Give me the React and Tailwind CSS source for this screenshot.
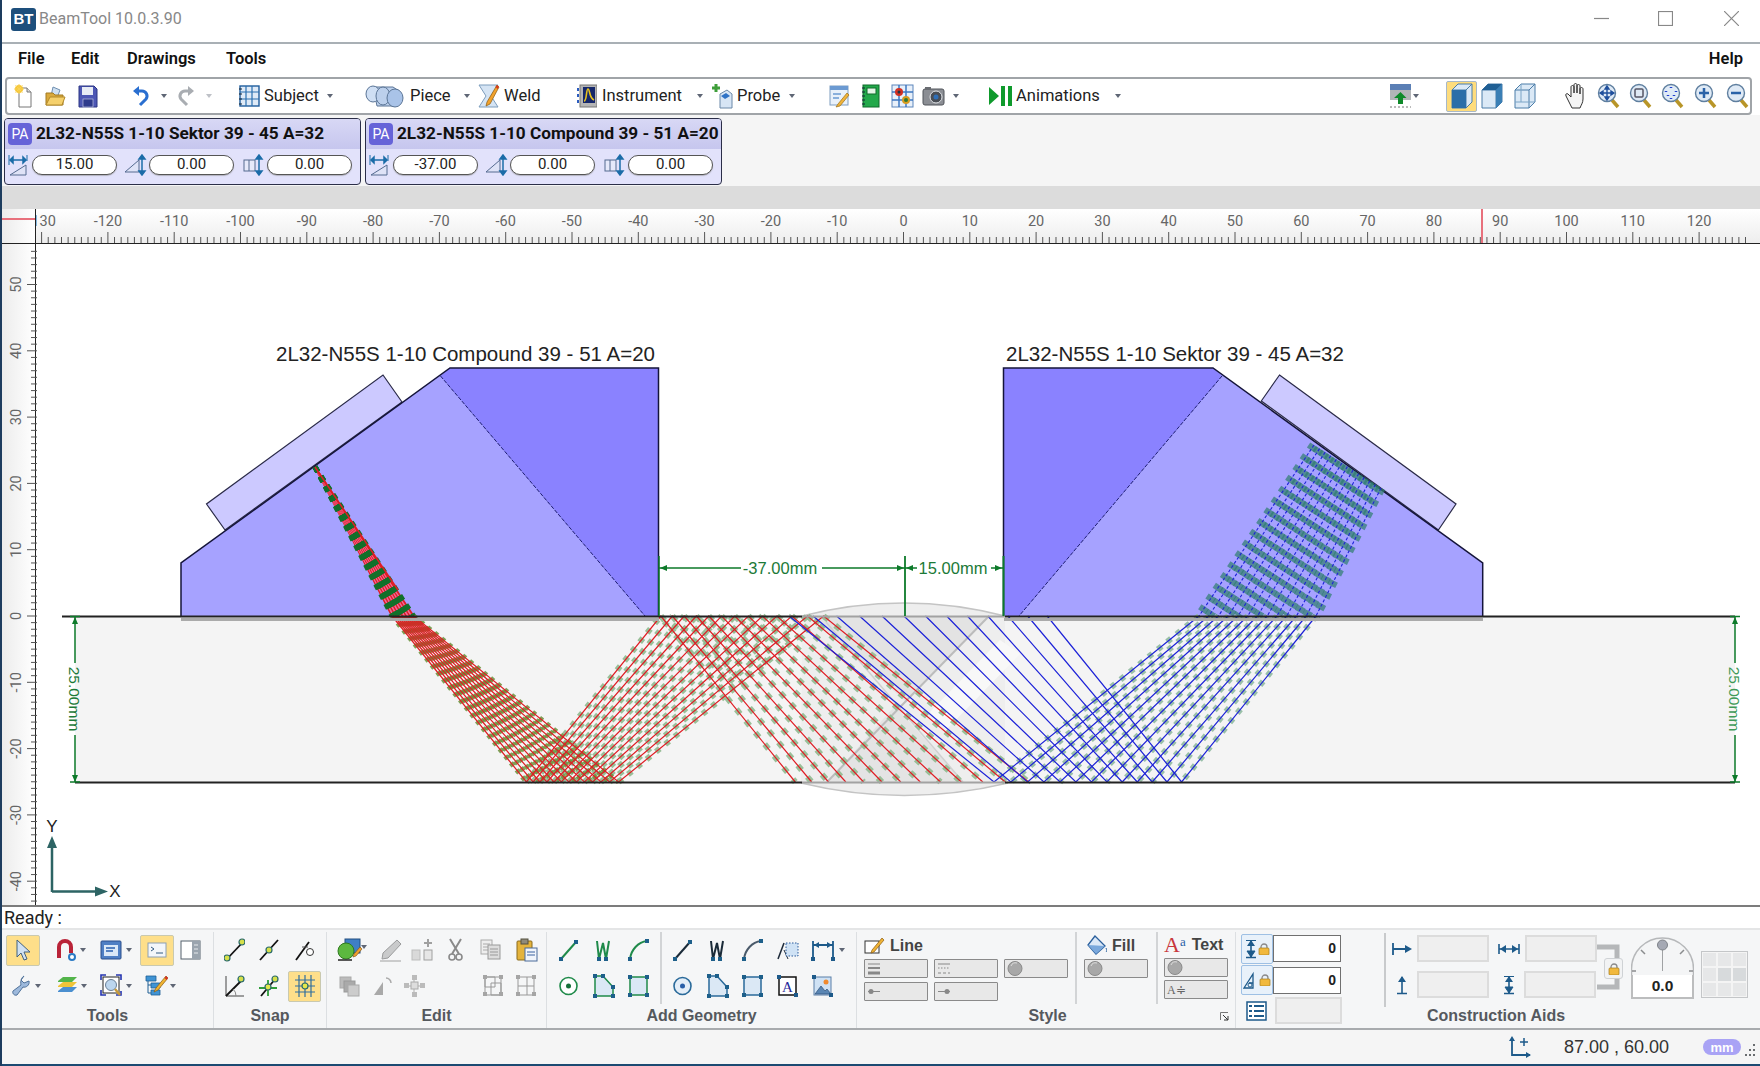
import React from 'react'

const rad = (d) => (d * Math.PI) / 180
const range = (n) => Array.from({ length: n }, (_, i) => i)

function I({ w, h = 20, className = '', children }) {
  return (
    <svg width={w} height={h} viewBox={`0 0 ${w} ${h}`} className={`shrink-0 ${className}`}>
      {children}
    </svg>
  )
}

const Caret = ({ className = '' }) => (
  <I w={6} h={4} className={className}><path d="M0 0h6L3 4z" fill="#5f6675" /></I>
)

/* ---------- top toolbar icons ---------- */
const NewFile = ({ className }) => (
  <I w={18} h={24} className={className}>
    <path d="M5 4h8l4 4v15H5z" fill="#fff" stroke="#777" />
    <path d="M13 4v4h4" fill="#ddd" stroke="#777" />
    <circle cx="5" cy="5" r="4" fill="#f7c531" />
    <path d="M5 0v10M0 5h10M1.5 1.5l7 7M8.5 1.5l-7 7" stroke="#f7d25a" strokeWidth="1" />
  </I>
)
const OpenFolder = ({ className }) => (
  <I w={22} h={22} className={className}>
    <path d="M9 2l7 3-3 8-6-2z" fill="#cfe0f2" stroke="#6f8fb0" />
    <path d="M2 8h7l2 2h8v10H2z" fill="#d9a93c" stroke="#a27b23" />
    <path d="M2 20l4-8h15l-3 8z" fill="#f5d06c" stroke="#b38a2b" />
  </I>
)
const Save = ({ className }) => (
  <I w={20} h={24} className={className}>
    <path d="M1 2h15l3 3v18H1z" fill="#4d57b4" stroke="#2d3684" />
    <rect x="4" y="3" width="11" height="8" fill="#e8ecf5" />
    <rect x="5" y="15" width="10" height="8" fill="#2e3a8c" stroke="#cfd4ea" strokeWidth=".6" />
  </I>
)
const Undo = ({ color = '#2a6fd0', flip = false, className }) => (
  <I w={18} h={22} className={className}>
    <g transform={flip ? 'translate(18 0) scale(-1 1)' : undefined}>
      <path d="M5 6h5a5 5 0 0 1 4 8l-6 6" fill="none" stroke={color} strokeWidth="3" />
      <path d="M7 1L1 6l6 5z" fill={color} />
    </g>
  </I>
)
const Subject = ({ className }) => (
  <I w={22} h={24} className={className}>
    <rect x="2" y="2" width="19" height="20" fill="#dfeaf7" stroke="#1f5c9c" strokeWidth="1.4" />
    <path d="M8 2v20M14 2v20M2 8h19M2 15h19" stroke="#2a6fb0" strokeWidth="1.2" />
    <path d="M1 5h3M1 10h3M1 15h3M1 20h3" stroke="#123" strokeWidth="1" />
  </I>
)
const Piece = ({ className }) => (
  <I w={40} h={24} className={className}>
    <path d="M8 3h20l6 4c3 5 2 12-4 15H12z" fill="#bcd0ec" stroke="#5b7596" />
    <ellipse cx="8" cy="10" rx="7" ry="8" fill="#cfdff4" stroke="#5b7596" />
    <ellipse cx="18" cy="12" rx="7" ry="9" fill="#bcd0ec" stroke="#5b7596" />
    <ellipse cx="30" cy="14" rx="8" ry="9" fill="#a9c3e8" stroke="#5b7596" />
  </I>
)
const Weld = ({ className }) => (
  <I w={22} h={26} className={className}>
    <path d="M1 2h19l-7 11 7 11H1l7-11z" fill="#d5e4f4" stroke="#7d9dbd" />
    <path d="M19 2L9 19l-1 4 4-2L21 4z" fill="#f2a22c" stroke="#8a5a10" strokeWidth=".7" />
    <path d="M19 2l2 2-1.5 2-2-2z" fill="#d9381e" />
  </I>
)
const Instrument = ({ className }) => (
  <I w={20} h={24} className={className}>
    <rect x="3" y="1" width="17" height="22" fill="#b5b5b5" stroke="#777" />
    <rect x="6" y="3" width="12" height="16" fill="#16286b" />
    <path d="M7 17c3 0 2-12 4-12s1 9 6 11" fill="none" stroke="#e8c21c" strokeWidth="1.6" />
    <path d="M1 4v3M1 10v3M1 16v3" stroke="#2a5cc0" strokeWidth="2" />
  </I>
)
const Probe = ({ className }) => (
  <I w={22} h={26} className={className}>
    <path d="M5 1v8M1 5h8" stroke="#3f9e3a" strokeWidth="3" />
    <path d="M9 11l7-4 5 4v14H9z" fill="#d7e5f5" stroke="#6a88a8" />
    <path d="M10 13l5-3 4 3-5 3z" fill="#2e72c6" />
  </I>
)
const Notes = ({ className }) => (
  <I w={21} h={24} className={className}>
    <rect x="1" y="2" width="18" height="19" fill="#e9f1fa" stroke="#7f9dc0" />
    <rect x="1" y="2" width="18" height="4" fill="#6b9ad2" />
    <path d="M4 10h8M4 14h6" stroke="#6b9ad2" strokeWidth="1.5" />
    <path d="M18 9L9 20l-2 3 4-1 9-11z" fill="#f1b43a" stroke="#9a6d16" strokeWidth=".7" />
  </I>
)
const Notebook = ({ className }) => (
  <I w={19} h={24} className={className}>
    <rect x="2" y="1" width="16" height="22" fill="#22a84a" stroke="#0f6a2b" />
    <rect x="6" y="4" width="9" height="6" fill="#e4f5e7" stroke="#0f6a2b" />
    <path d="M1 4h3M1 8h3M1 12h3M1 16h3M1 20h3" stroke="#123" />
  </I>
)
const GridDots = ({ className }) => (
  <I w={23} h={24} className={className}>
    <rect x="1" y="1" width="21" height="22" fill="#e8f0fa" stroke="#5d86bb" />
    <path d="M1 8h21M1 16h21M8 1v22M15 1v22" stroke="#3e78c2" strokeWidth="1.5" />
    <circle cx="8" cy="8" r="4" fill="#d22f22" /><circle cx="8" cy="8" r="1.5" fill="#26303c" />
    <circle cx="15" cy="16" r="4" fill="#d89b1e" /><circle cx="15" cy="16" r="2" fill="#2c7a34" />
  </I>
)
const Camera = ({ className }) => (
  <I w={23} h={20} className={className}>
    <rect x="1" y="3" width="21" height="16" rx="2" fill="#8b8e94" stroke="#50545a" />
    <rect x="3" y="1" width="6" height="3" fill="#6a6d72" />
    <circle cx="14" cy="11" r="6" fill="#4a4e55" stroke="#dfe2e6" />
    <circle cx="14" cy="11" r="2.5" fill="#2f6fb8" />
  </I>
)
const PlayBars = ({ className }) => (
  <I w={24} h={20} className={className}>
    <path d="M0 1l10 9-10 9z" fill="#0f9a2c" />
    <rect x="12" y="0" width="4" height="20" fill="#0f9a2c" />
    <rect x="19" y="0" width="4" height="20" fill="#0f9a2c" />
  </I>
)
const LayerUp = ({ className }) => (
  <I w={21} h={24} className={className}>
    <rect x="0" y="0" width="21" height="6" fill="#5b7fb5" />
    <rect x="0" y="6" width="21" height="10" fill="#b3b5b8" />
    <path d="M10.5 8l6 6h-3.500v6h-5v-6H4z" fill="#0f8a2a" />
    <path d="M0 23h21" stroke="#777" strokeDasharray="2 2" />
  </I>
)
const Cube = ({ mode, className }) => (
  <I w={24} h={28} className={className}>
    <path d="M2 8l6-6h14v18l-6 6H2z" fill="#dbe9f6" stroke="#4a7ca8" />
    <path d="M2 8h14v18" fill="none" stroke="#4a7ca8" />
    <path d="M16 8l6-6" stroke="#4a7ca8" />
    {mode === 0 && <rect x="2" y="8" width="14" height="18" fill="#2b6ea8" />}
    {mode === 1 && <path d="M2 8l6-6h14l-6 6z" fill="#1f5f94" />}
    {mode === 1 && <path d="M16 8l6-6v18l-6 6z" fill="#3a7fb5" />}
    {mode === 2 && <path d="M8 2v18H2M8 20l14 0" fill="none" stroke="#7ba4c6" />}
  </I>
)
const Hand = ({ className }) => (
  <I w={23} h={26} className={className}>
    <path d="M6 21L2 13c-1-2 1-3 2-2l3 3V4c0-2 3-2 3 0v6V2c0-2 3-2 3 0v8V3c0-2 3-2 3 0v8-5c0-2 3-2 3 0v10c0 4-2 6-3 9H8z" fill="#f5f5f5" stroke="#333" />
  </I>
)
const Mag = ({ kind, className }) => (
  <I w={23} h={26} className={className}>
    <path d="M15 17l6 7" stroke="#b89528" strokeWidth="3.5" />
    <circle cx="10" cy="10" r="8.5" fill="#dfeaf6" stroke="#5f7f9f" strokeWidth="1.4" />
    {kind === 'plus' && <path d="M5 10h10M10 5v10" stroke="#2a62a8" strokeWidth="2.5" />}
    {kind === 'minus' && <path d="M5 10h10" stroke="#2a62a8" strokeWidth="2.5" />}
    {kind === 'rect' && <rect x="6" y="6" width="8" height="8" rx="1" fill="none" stroke="#556" strokeWidth="1.5" />}
    {kind === 'dots' && <path d="M10 4v1M5 8v1M15 8v1M10 15v1M7 12v1M13 12v1" stroke="#1f3fd0" strokeWidth="2.5" />}
    {kind === 'move' && <path d="M10 3v14M3 10h14M10 3l-2 3h4zM10 17l-2-3h4zM3 10l3-2v4zM17 10l-3-2v4z" stroke="#1f4f9c" strokeWidth="1.4" fill="#1f4f9c" />}
  </I>
)

/* ---------- probe panel icons ---------- */
const OffsetIcon = ({ className }) => (
  <I w={20} h={24} className={className}>
    <path d="M2 22L18 12v10z" fill="#dfe3f7" stroke="#556b90" />
    <path d="M2 7h16M2 7l3-3v6zM18 7l-3-3v6z" stroke="#1b6ca8" strokeWidth="1.5" fill="#1b6ca8" />
    <path d="M1 2v10M19 2v6" stroke="#1b6ca8" />
  </I>
)
const AngleIcon = ({ className }) => (
  <I w={23} h={24} className={className}>
    <path d="M1 19L15 7v12z" fill="#dfe3f7" stroke="#556b90" />
    <path d="M18 2v20M18 2l-3 4h6zM18 22l-3-4h6z" stroke="#1b6ca8" strokeWidth="1.5" fill="#1b6ca8" />
  </I>
)
const SkewIcon = ({ className }) => (
  <I w={21} h={24} className={className}>
    <rect x="1" y="7" width="11" height="11" fill="#e6e9fa" stroke="#556b90" />
    <path d="M6 7v11" stroke="#556b90" />
    <path d="M16 2v20M16 2l-3 4h6zM16 22l-3-4h6z" stroke="#1b6ca8" strokeWidth="1.5" fill="#1b6ca8" />
  </I>
)

/* ---------- ribbon icons ---------- */
const ArrowPtr = () => (
  <I w={16} h={22}><path d="M2 1v17l4-4 3 7 3-1-3-7h6z" fill="#cfe0f2" stroke="#41607f" /></I>
)
const Magnet = ({ className }) => (
  <I w={19} h={24} className={className}>
    <path d="M2 20V9a6 6 0 0 1 12 0v6" fill="none" stroke="#b92338" strokeWidth="4" />
    <circle cx="15" cy="19" r="3" fill="#fff" stroke="#2a7ac4" strokeWidth="2" />
  </I>
)
const WindowIcon = ({ className }) => (
  <I w={22} h={20} className={className}>
    <rect x="1" y="1" width="20" height="18" rx="1" fill="#4f7fc4" stroke="#2a4f8c" />
    <rect x="4" y="5" width="14" height="11" fill="#dbe8f7" />
    <path d="M6 8h9M6 11h7" stroke="#2a5fb0" strokeWidth="1.5" />
  </I>
)
const ConsoleIcon = () => (
  <I w={20} h={16}>
    <rect x="1" y="1" width="18" height="14" fill="#f3f6fa" stroke="#8ca0b4" />
    <path d="M4 5l3 2-3 2M9 11h7" fill="none" stroke="#335a80" />
  </I>
)
const PanelIcon = ({ className }) => (
  <I w={21} h={20} className={className}>
    <rect x="1" y="1" width="19" height="18" fill="#fff" stroke="#54606c" />
    <rect x="12" y="1" width="8" height="18" fill="#9aa4ae" />
    <path d="M14 5h4M14 9h4M14 13h4" stroke="#e6e9ec" />
  </I>
)
const Wrench = ({ className }) => (
  <I w={20} h={22} className={className}>
    <path d="M13 1l-3 4 3 3 5-2c1 4-3 7-6 6l-6 8c-3 1-5-2-4-4l8-6c-1-4 1-8 3-9z" fill="#9db9dc" stroke="#50729a" />
  </I>
)
const Layers = ({ className }) => (
  <I w={21} h={22} className={className}>
    <path d="M1 16l5-4h14l-5 5H1z" fill="#4a8fd0" />
    <path d="M1 11l5-4h14l-5 5H1z" fill="#efc43a" />
    <path d="M1 6l5-4h14l-5 5H1z" fill="#52b44a" />
  </I>
)
const ZoomFrame = ({ className }) => (
  <I w={22} h={24} className={className}>
    <path d="M1 6V1h5M16 1h5v5M21 17v4h-5M6 21H1v-5" fill="none" stroke="#2434b0" strokeWidth="1.6" />
    <rect x="3" y="3" width="16" height="16" fill="#fff" stroke="#222" />
    <circle cx="11" cy="11" r="5.5" fill="#bcd6ee" stroke="#6a7f95" />
    <path d="M15 15l5 6" stroke="#c79a3a" strokeWidth="2.5" />
  </I>
)
const Editor = ({ className }) => (
  <I w={23} h={24} className={className}>
    <path d="M1 2h10v5H1zM6 9h9v5H6zM6 16h9v5H6z" fill="#3f93d4" stroke="#1f5f94" strokeWidth=".8" />
    <path d="M3 7v12h3M3 11h3" stroke="#1f5f94" fill="none" />
    <path d="M21 2L11 14l-2 4 4-2L23 4z" fill="#f0b432" stroke="#8a5a10" strokeWidth=".7" />
    <path d="M21 2l2 2-1.5 2-2-2z" fill="#d4332a" />
  </I>
)
const Node = ({ x, y, r = 3, color = '#d6e04a' }) => (
  <circle cx={x} cy={y} r={r} fill={color} stroke="#2a6a6a" strokeWidth="1.2" />
)
const Snap = ({ kind, className }) => (
  <I w={21} h={24} className={className}>
    {kind === 'end' && (<><path d="M3 21L19 4" stroke="#111" strokeWidth="1.8" /><Node x={3} y={20} /><Node x={18} y={4} /></>)}
    {kind === 'mid' && (<><path d="M2 22L20 2" stroke="#111" strokeWidth="1.8" /><Node x={11} y={12} /></>)}
    {kind === 'on' && (<><path d="M2 22L15 4" stroke="#111" strokeWidth="1.8" /><path d="M8 9h6" stroke="#555" /><circle cx={16} cy={14} r="3.5" fill="#fff" stroke="#333" /></>)}
    {kind === 'ang' && (<><path d="M2 2v20h18" stroke="#444" fill="none" /><path d="M2 22L18 6" stroke="#111" strokeWidth="1.8" /><Node x={17} y={5} /><path d="M9 15a9 9 0 0 1 3 7" stroke="#888" fill="none" /></>)}
    {kind === 'int' && (<><path d="M1 14h18M10 22V6" stroke="#2f9e3a" strokeWidth="1.8" /><path d="M3 22L18 4" stroke="#111" strokeWidth="1.8" /><Node x={10} y={13} color="#e4e84a" /><Node x={17} y={5} /></>)}
    {kind === 'grid' && (<><path d="M1 6h20M1 12h20M1 18h20M5 1v22M11 1v22M17 1v22" stroke="#2f6f9f" strokeWidth="1.2" /><Node x={11} y={12} color="#e4e84a" /></>)}
  </I>
)
const ShapePaint = ({ className }) => (
  <I w={27} h={24} className={className}>
    <rect x="8" y="1" width="15" height="14" fill="#3f7fc4" stroke="#244f80" />
    <circle cx="9" cy="13" r="8" fill="#5cb83f" stroke="#2f7a1f" />
    <path d="M17 16l6-7 2 2-6 7-3 1z" fill="#f0a030" stroke="#7a5010" strokeWidth=".6" />
    <path d="M1 22h14" stroke="#222" strokeWidth="1.5" />
  </I>
)
const GrayEraser = ({ className }) => (
  <I w={23} h={24} className={className}>
    <path d="M18 2l4 4L9 20l-6 1 1-6z" fill="#c9cacb" stroke="#9a9b9c" />
    <path d="M1 23h21" stroke="#a0a0a0" />
  </I>
)
const GrayAdd = ({ className }) => (
  <I w={23} h={24} className={className}>
    <rect x="1" y="12" width="8" height="10" fill="#d9d9d9" stroke="#bdbdbd" />
    <rect x="13" y="12" width="8" height="10" fill="#e6e6e6" stroke="#a0a0a0" />
    <path d="M17 1v8M13 5h8" stroke="#a0a0a0" strokeWidth="2" />
  </I>
)
const GrayCut = ({ className }) => (
  <I w={15} h={24} className={className}>
    <path d="M2 1l9 15M13 1L4 16" stroke="#8a8a8a" strokeWidth="2" />
    <circle cx="4" cy="19" r="3" fill="none" stroke="#8a8a8a" strokeWidth="1.6" />
    <circle cx="11" cy="19" r="3" fill="none" stroke="#8a8a8a" strokeWidth="1.6" />
  </I>
)
const GrayCopy = ({ className }) => (
  <I w={21} h={24} className={className}>
    <rect x="1" y="2" width="11" height="14" fill="#eee" stroke="#aaa" />
    <path d="M3 6h7M3 9h7M3 12h7" stroke="#aaa" />
    <rect x="8" y="7" width="12" height="14" fill="#ddd" stroke="#999" />
    <path d="M10 11h8M10 14h8M10 17h8" stroke="#999" />
  </I>
)
const Paste = ({ className }) => (
  <I w={23} h={24} className={className}>
    <rect x="2" y="3" width="15" height="19" rx="1" fill="#e4b33c" stroke="#8a6a1c" />
    <rect x="6" y="1" width="7" height="5" fill="#8f8a7a" stroke="#55503f" />
    <rect x="10" y="10" width="12" height="13" fill="#f1f5fb" stroke="#4a6a9a" />
    <path d="M12 14h8M12 17h8" stroke="#3a62a0" />
  </I>
)
const GrayStack = ({ className }) => (
  <I w={21} h={24} className={className}>
    <rect x="1" y="3" width="11" height="11" fill="#bbb" stroke="#aaa" />
    <rect x="5" y="7" width="11" height="11" fill="#aaa" stroke="#999" />
    <rect x="9" y="11" width="11" height="11" fill="#ccc" stroke="#aaa" />
  </I>
)
const GrayMirror = ({ className }) => (
  <I w={19} h={24} className={className}>
    <path d="M1 21L10 8v13z" fill="#a9a9a9" />
    <path d="M13 4a5 5 0 0 1 5 5" fill="none" stroke="#aaa" strokeWidth="1.5" />
  </I>
)
const GrayMove = ({ className }) => (
  <I w={21} h={24} className={className}>
    <path d="M10 3v18M2 12h17" stroke="#c6c6c6" strokeWidth="1.5" />
    <rect x="8" y="1" width="5" height="5" fill="#bbb" />
    <rect x="8" y="18" width="5" height="5" fill="#bbb" />
    <rect x="0" y="9" width="5" height="5" fill="#bbb" />
    <rect x="16" y="9" width="5" height="5" fill="#bbb" />
    <rect x="7" y="8" width="7" height="7" fill="#ddd" stroke="#aaa" />
  </I>
)
const GrayGroup = ({ alt, className }) => (
  <I w={22} h={24} className={className}>
    <path d="M3 3h16v18H3z" fill="none" stroke="#999" />
    <path d={alt ? 'M3 12h9v9M12 3v9h7' : 'M9 9h10v12H9zM3 3h10v10H3z'} fill="none" stroke="#999" />
    {[[1, 1], [17, 1], [1, 18], [17, 18]].map(([x, y]) => (
      <rect key={`${x}${y}`} x={x} y={y} width="4" height="4" fill="#a5a5a5" />
    ))}
  </I>
)
const Sq = ({ x, y, c }) => <rect x={x - 2} y={y - 2} width="4" height="4" fill={c} />
const GeoLine = ({ c, n, className }) => (
  <I w={19} h={24} className={className}>
    <path d="M2 21L17 4" stroke={c} strokeWidth="2" /><Sq x={2} y={21} c={n} /><Sq x={17} y={4} c={n} />
  </I>
)
const GeoW = ({ c, n, className }) => (
  <I w={18} h={24} className={className}>
    <path d="M3 3l2 18 4-16 3 16 3-18" fill="none" stroke={c} strokeWidth="2" />
    <Sq x={5} y={21} c={n} /><Sq x={12} y={21} c={n} />
  </I>
)
const GeoCurve = ({ c, n, className }) => (
  <I w={21} h={24} className={className}>
    <path d="M2 21C3 12 10 4 19 3" fill="none" stroke={c} strokeWidth="2" /><Sq x={2} y={21} c={n} /><Sq x={19} y={3} c={n} />
  </I>
)
const GeoCircle = ({ c, n, fill = '#fff', className }) => (
  <I w={19} h={24} className={className}>
    <circle cx="9.5" cy="12" r="8.5" fill={fill} stroke={c} strokeWidth="1.6" /><circle cx="9.5" cy="12" r="2.5" fill={n} />
  </I>
)
const GeoPoly = ({ c, n, className }) => (
  <I w={22} h={24} className={className}>
    <path d="M2 2h8l10 11v9H2z" fill="#dbe8f5" stroke={c} strokeWidth="1.5" />
    <Sq x={2} y={2} c={n} /><Sq x={10} y={2} c={n} /><Sq x={20} y={13} c={n} /><Sq x={20} y={22} c={n} /><Sq x={2} y={22} c={n} />
  </I>
)
const GeoSquare = ({ c, n, className }) => (
  <I w={21} h={24} className={className}>
    <rect x="2" y="3" width="17" height="18" fill="#dbe8f5" stroke={c} strokeWidth="1.5" />
    <Sq x={2} y={3} c={n} /><Sq x={19} y={3} c={n} /><Sq x={2} y={21} c={n} /><Sq x={19} y={21} c={n} />
  </I>
)
const SkewRect = ({ className }) => (
  <I w={22} h={24} className={className}>
    <path d="M1 21L7 5" stroke="#1d2a3a" strokeWidth="1.5" />
    <path d="M7 12l4 9" stroke="#1d2a3a" />
    <rect x="9" y="5" width="12" height="13" fill="#cfe2f5" stroke="#2a5a9a" strokeDasharray="1.5 1.5" />
  </I>
)
const DimIcon = ({ className }) => (
  <I w={24} h={24} className={className}>
    <path d="M2 3v18M22 3v18M2 7h20" stroke="#1d5a8a" strokeWidth="1.8" fill="none" />
    <path d="M3 7l5-3v6zM21 7l-5-3v6z" fill="#1d5a8a" />
    <rect x="0" y="19" width="4" height="4" fill="#1d5a8a" /><rect x="20" y="19" width="4" height="4" fill="#1d5a8a" />
  </I>
)
const TextBoxIcon = ({ className }) => (
  <I w={21} h={24} className={className}>
    <rect x="2" y="3" width="17" height="18" fill="#fff" stroke="#111" strokeWidth="1.5" />
    <text x="10.5" y="18" textAnchor="middle" fontFamily="Liberation Serif, serif" fontSize="15" fill="#2a2a9a">A</text>
    <Sq x={19} y={21} c="#1d5a8a" /><Sq x={2} y={3} c="#1d5a8a" />
  </I>
)
const ImageIcon = ({ className }) => (
  <I w={21} h={24} className={className}>
    <rect x="2" y="3" width="17" height="18" fill="#cfe2f5" stroke="#5a7fa8" />
    <circle cx="14" cy="8" r="2.5" fill="#f08a30" />
    <path d="M3 20l6-8 4 5 2-2 4 5z" fill="#5a86b4" stroke="#2d4f78" strokeWidth=".7" />
    <Sq x={2} y={3} c="#1d5a8a" /><Sq x={19} y={21} c="#1d5a8a" />
  </I>
)
const LinePencil = () => (
  <I w={21} h={18}>
    <rect x="1" y="4" width="14" height="12" fill="#fff" stroke="#333" />
    <path d="M18 1L8 13l-1 3 3-1L20 3z" fill="#efb336" stroke="#8a5a10" strokeWidth=".7" />
  </I>
)
const Bucket = () => (
  <I w={21} h={22}>
    <path d="M9 1l-7 9 8 9 9-8z" fill="#dbe8f7" stroke="#2a5f9c" strokeWidth="1.3" />
    <path d="M2 10l17 1-9 8z" fill="#7aa8dc" />
    <path d="M20 13c1 2 1 3 0 4" stroke="#2a5f9c" fill="none" />
  </I>
)
const Ball = () => (
  <I w={16} h={17}>
    <circle cx="8" cy="8.5" r="7" fill="#a8a8a8" stroke="#8a8a8a" /><path d="M4 6a5 5 0 0 1 6-3" stroke="#ddd" fill="none" />
  </I>
)
const Launcher = () => (
  <I w={9} h={9}>
    <path d="M.5 8V.5H8" fill="none" stroke="#777" /><path d="M3 3l5 5M8 4v4H4" fill="none" stroke="#333" />
  </I>
)
const ArrowV = ({ dbl }) => (
  <I w={14} h={20}>
    <path d="M7 2v16M2 18.5h10" stroke="#1d5a8a" strokeWidth="1.6" />
    <path d="M7 1l-4 6h8z" fill="#1d5a8a" />
    {dbl && <path d="M7 18l-4-6h8zM2 1.5h10" fill="#1d5a8a" stroke="#1d5a8a" />}
  </I>
)
const LockBadge = () => (
  <I w={12} h={12}>
    <path d="M3 6V4a3 3 0 0 1 6 0v2" fill="none" stroke="#8a8a8a" strokeWidth="1.3" />
    <rect x="1" y="5" width="10" height="7" rx="1" fill="#f1b93e" stroke="#a37b1c" strokeWidth=".7" />
  </I>
)

function Probe1({ name, v, className = '' }) {
  const pill = 'flex items-center justify-center h-[20px] w-[85px] rounded-full border border-[#555] bg-white text-[15px] text-[#222] shadow-[0_1px_1px_#8888]'
  return (
    <div className={`w-[357px] h-[67px] border border-[#2b2e48] rounded-[4px] bg-[#e2e2fb] flex flex-col overflow-hidden font-['Roboto',sans-serif] ${className}`}>
      <div className="h-[30px] flex items-center bg-linear-to-b from-[#d8d8f5] to-[#c6c6ee] shrink-0">
        <span className="ml-[3px] w-[24px] h-[22px] rounded-[4px] bg-[#6663d8] text-white text-[14px] flex items-center justify-center">PA</span>
        <span className="ml-[4px] whitespace-nowrap text-[17.2px] font-bold text-[#111]">{name}</span>
      </div>
      <div className="flex items-center flex-1 pb-[4px]">
        <OffsetIcon className="ml-[3px]" />
        <div className={`${pill} ml-[4px]`}>{v}</div>
        <AngleIcon className="ml-[7px]" />
        <div className={`${pill} ml-[2px]`}>0.00</div>
        <SkewIcon className="ml-[9px]" />
        <div className={`${pill} ml-[3px]`}>0.00</div>
      </div>
    </div>
  )
}

/* ---------- rulers ---------- */
const X0 = 903.5
const Y0 = 616
const U = 6.63

function TopRuler() {
  return (
    <svg width={1724} height={35} viewBox="36 209 1724 35" className="block">
      {range(258).map((i) => {
        const v = i - 130
        const x = X0 + v * U
        const major = v % 10 === 0
        return (
          <g key={v}>
            <path d={`M${x} ${major ? 232 : 237}V243`} stroke="#555" strokeWidth="1" />
            {major && <text x={x} y={226} textAnchor="middle" fontSize="14.5" fill="#666" fontFamily="Roboto, sans-serif">{v}</text>}
          </g>
        )
      })}
      <path d="M1482 209V243" stroke="#e8707c" strokeWidth="2" />
      <path d="M36 243.5H1760" stroke="#222" />
    </svg>
  )
}
function LeftRuler() {
  return (
    <svg width={35} height={661} viewBox="0 244 35 661" className="block">
      {range(99).map((i) => {
        const v = 55 - i
        const y = Y0 - v * U
        const major = v % 10 === 0
        return (
          <g key={v}>
            <path d={`M${major ? 25 : 29} ${y}H35`} stroke="#555" strokeWidth="1" />
            {major && <text x={0} y={0} transform={`translate(19 ${y}) rotate(-90)`} textAnchor="middle" fontSize="14.5" fill="#666" fontFamily="Roboto, sans-serif">{v}</text>}
          </g>
        )
      })}
    </svg>
  )
}

/* ---------- the drawing ---------- */
function Rays() {
  const h = 166
  const red = range(13).map((i) => {
    const t = i / 12
    const tan = Math.tan(rad(39 + 12 * t))
    const e = 392 + 21.6 * t
    const b1 = e + h * tan
    const t2 = b1 + h * tan
    const b2 = t2 + h * tan
    return { e, b1, t2, b2 }
  })
  const blue = range(13).map((i) => {
    const t = i / 12
    const tan = Math.tan(rad(51 - 12 * t))
    const e = 1199 + 117 * t
    const b1 = e - h * tan
    const t2 = b1 - h * tan
    return { cx: 1314 + 67 * t, cy: 445 + 43 * t, e, b1, t2 }
  })
  return (
    <g fill="none">
      {/* steel legs: green wave bands under the rays */}
      {red.map((r, i) => (
        <g key={i}>
          <path d={`M${r.e} 616L${r.b1} 782`} stroke="#6a8f3a" strokeWidth="5" strokeDasharray="4 5" opacity=".85" />
          <path d={`M${r.b1} 782L${r.t2} 616`} stroke="#8fb98f" strokeWidth="6" strokeDasharray="5 7" opacity=".9" />
          <path d={`M${r.t2} 616L${r.b2} 782`} stroke="#8fb98f" strokeWidth="6" strokeDasharray="6 9" opacity=".9" />
        </g>
      ))}
      {blue.map((r, i) => (
        <path key={i} d={`M${r.e} 616L${r.b1} 782`} stroke="#8fb9a0" strokeWidth="6" strokeDasharray="5 7" opacity=".9" />
      ))}
      {/* wedge legs */}
      {red.map((r, i) => (
        <path key={i} d={`M315 467L${r.e} 616`} stroke={i % 2 ? '#f06a98' : '#e01c24'} strokeWidth="1.8" />
      ))}
      {red.map((r, i) => (
        <path key={i} d={`M315 467L${r.e} 616`} stroke="#12702a" strokeWidth="5" strokeDasharray="5.5 5.5" />
      ))}
      <path d="M315 467L398 590" stroke="#e01c24" strokeWidth="1.5" />
      {blue.map((r, i) => (
        <path key={i} d={`M${r.cx} ${r.cy}L${r.e} 616`} stroke="#2f7d6e" strokeWidth="9" strokeDasharray="6 7" opacity=".7" />
      ))}
      {red.map((r, i) => (
        <path key={i} d={`M${r.e} 616L${r.b1} 782L${r.t2} 616L${r.b2} 782`} stroke="#e01c24" strokeWidth="1.2" />
      ))}
      {blue.map((r, i) => (
        <g key={i} stroke="#1d22d8">
          <path d={`M${r.cx} ${r.cy}L${r.e} 616`} strokeWidth="1.1" strokeDasharray="3 2" />
          <path d={`M${r.e} 616L${r.b1} 782L${r.t2} 616`} strokeWidth="1.2" />
        </g>
      ))}
    </g>
  )
}

function Drawing() {
  const green = '#0d7a2a'
  const sans = 'Liberation Sans, sans-serif'
  return (
    <svg width={1724} height={661} viewBox="36 244 1724 661" className="block">
      <rect x="75" y="616" width="1660" height="166" fill="#f4f4f4" />

      {/* weld lens */}
      <path d="M802 616Q904 590 1005 616V783Q904 808 801 783z" fill="#eeeeee" />
      <path d="M812 617H988L906 702z" fill="#e3e3e3" />
      <path d="M827 782H963L895 706z" fill="#e4e4e4" />
      <path d="M1000 640L930 712L946 730L1020 654z" fill="#f8f8f8" />
      <path d="M802 616Q904 590 1005 616M801 783Q904 808 1008 783" fill="none" stroke="#c4c4c4" strokeWidth="1.5" />
      <path d="M988 617L827 782" stroke="#bcbcbc" strokeWidth="2" />
      <path d="M826 622L963 782" stroke="#d0d0d0" strokeWidth="1.5" />

      {/* left probe */}
      <path d="M181 563V616H658.5V368H450z" fill="#a6a2ff" />
      <path d="M450 368H658.5V616H645L440.5 376z" fill="#8a82ff" />
      <path d="M440.5 376L645 616" stroke="#1d1d70" strokeDasharray="4 1.5" fill="none" />
      <path d="M383 375L402 402L225 530L206.5 504z" fill="#ccc9ff" stroke="#2a2a48" strokeWidth="1.2" />
      <path d="M181 616V563L450 368H658.5V616" fill="none" stroke="#14143a" strokeWidth="1.5" />

      {/* right probe */}
      <path d="M1482.7 563V616H1003.5V368H1213z" fill="#a6a2ff" />
      <path d="M1003.5 368H1213L1222 376L1019 616H1003.5z" fill="#8a82ff" />
      <path d="M1222 376L1019 616" stroke="#1d1d70" strokeDasharray="4 1.5" fill="none" />
      <path d="M1279.5 375L1456 504L1438.4 530L1261.3 401z" fill="#ccc9ff" stroke="#2a2a48" strokeWidth="1.2" />
      <path d="M1482.7 616V563L1213 368H1003.5V616" fill="none" stroke="#14143a" strokeWidth="1.5" />

      <Rays />

      {/* plate outline */}
      <path d="M181 619.5H659M1004 619.5H1483" stroke="#aaa" strokeWidth="3" />
      <path d="M62 616.5H802M1005 616.5H1735M75 782.5H802M1005 782.5H1735" stroke="#222" strokeWidth="2" />
      <path d="M802 616.5H1005M802 782.5H1005" stroke="#a2a2a2" strokeWidth="2" />

      {/* dimensions */}
      <g stroke={green} fill={green}>
        <path d="M659 568H741M822 568H905M905 568H917M991 568H1003" strokeWidth="1.4" />
        <path d="M905 556V616" strokeWidth="1.8" />
        <path d="M659 556V616" strokeWidth="1.5" />
        <path d="M1003.5 556V616" strokeWidth="2" />
        <path d="M660 568l7-3v6zM904 568l-7-3v6zM906 568l7-3v6zM1002 568l-7-3v6z" stroke="none" />
        <path d="M75 617V663M75 735V782M1735 617V663M1735 735V782M70 616.5H80M70 782H80M1730 616.5H1740M1730 782H1740" strokeWidth="1.5" />
        <path d="M75 617l-3 7h6zM75 782l-3-7h6zM1735 617l-3 7h6zM1735 782l-3-7h6z" stroke="none" />
      </g>
      <g fontFamily={sans}>
        <text x={780} y={574} textAnchor="middle" fontSize="16.5" fill="#1c7a38">-37.00mm</text>
        <text x={953} y={574} textAnchor="middle" fontSize="16.5" fill="#1c7a38">15.00mm</text>
        <text transform="translate(69 699) rotate(90)" textAnchor="middle" fontSize="15.5" fill="#1c7a38">25.00mm</text>
        <text transform="translate(1729 699) rotate(90)" textAnchor="middle" fontSize="15.5" fill="#3f9a58">25.00mm</text>
      </g>

      {/* probe titles */}
      <text x={276} y={361} fontFamily={sans} fontSize="20.5" fill="#222">2L32-N55S 1-10 Compound 39 - 51 A=20</text>
      <text x={1006} y={361} fontFamily={sans} fontSize="20.5" fill="#222">2L32-N55S 1-10 Sektor 39 - 45 A=32</text>

      {/* axis marker */}
      <path d="M52 892V845M52 891.5H98" stroke="#2d6464" strokeWidth="2.5" fill="none" />
      <path d="M52 836l-5 12h10zM108 891.5l-13-5v10z" fill="#2d6464" />
      <text x={52} y={832} textAnchor="middle" fontFamily={sans} fontSize="17" fill="#222">Y</text>
      <text x={115} y={897} textAnchor="middle" fontFamily={sans} fontSize="17" fill="#222">X</text>
    </svg>
  )
}

/* ---------- ribbon bits ---------- */
const GrayBox = ({ w = 'w-[64px]', className = '', children }) => (
  <div className={`${w} h-[19px] border border-[#8a8a8a] rounded-[1px] bg-[#e8e8e8] flex items-center pl-[2px] shrink-0 ${className}`}>{children}</div>
)
const GroupLabel = ({ children, className = '' }) => (
  <div className={`h-[24px] flex items-center justify-center font-['Liberation_Sans',sans-serif] font-bold text-[16px] text-[#55595e] ${className}`}>{children}</div>
)
const Row = ({ children }) => <div className="h-[36px] flex items-center">{children}</div>
const Active = ({ w = 'w-[34px]', children, className = '' }) => (
  <div className={`${w} h-[31px] shrink-0 flex items-center justify-center rounded-[2px] border border-[#c9c9b0] bg-[#fedf8a] ${className}`}>{children}</div>
)
const Ctrl = ({ className = '' }) => <div className={`h-[27px] w-[72px] border-2 border-[#dcdcdc] bg-[#efefef] shrink-0 ${className}`} />

const G = '#1f8a4a'
const GN = '#1d5f8a'
const B = '#2a6a9a'

export default function App() {
  return (
    <div className="w-[1760px] h-[1066px] overflow-hidden bg-white border-l-2 border-[#1d3c5e] flex flex-col font-['Roboto',sans-serif] text-[#222]">
      {/* title bar */}
      <div className="h-[42px] shrink-0 flex items-center">
        <div className="ml-[9px] mb-[4px] w-[25px] h-[23px] rounded-[3px] bg-[#1d4f7c] text-white text-[15px] font-bold flex items-center justify-center font-['Liberation_Sans',sans-serif]">BT</div>
        <span className="ml-[3px] mb-[4px] text-[16px] text-[#888] whitespace-nowrap">BeamTool 10.0.3.90</span>
        <div className="ml-auto flex items-center mb-[6px]">
          <I w={15} h={3}><path d="M0 1.5h15" stroke="#888" strokeWidth="1.2" /></I>
          <I w={15} h={15} className="ml-[49px]"><rect x=".5" y=".5" width="14" height="14" fill="none" stroke="#888" strokeWidth="1.2" /></I>
          <I w={15} h={15} className="ml-[51px] mr-[21px]"><path d="M0 0l15 15M15 0L0 15" stroke="#888" strokeWidth="1.2" /></I>
        </div>
      </div>

      {/* menu bar */}
      <div className="h-[35px] shrink-0 border-t-2 border-[#a9b0b5] flex items-center pb-[2px] text-[16.5px] font-semibold text-[#111] whitespace-nowrap">
        <span className="ml-[16px] w-[28px]">File</span>
        <span className="ml-[25px] w-[31px]">Edit</span>
        <span className="ml-[25px] w-[74px]">Drawings</span>
        <span className="ml-[25px] w-[40px]">Tools</span>
        <span className="ml-auto mr-[17px]">Help</span>
      </div>

      {/* main toolbar */}
      <div className="h-[38px] shrink-0 ml-[3px] mr-[8px] bg-white border-2 border-[#a0a4a8] rounded-[4px] flex items-center text-[16.5px] text-[#222] whitespace-nowrap">
        <NewFile className="ml-[7px]" />
        <OpenFolder className="ml-[12px]" />
        <Save className="ml-[12px]" />
        <Undo className="ml-[34px]" />
        <Caret className="ml-[11px]" />
        <Undo flip color="#a9adb2" className="ml-[10px]" />
        <Caret className="ml-[11px] opacity-40" />
        <Subject className="ml-[26px]" />
        <span className="ml-[4px] w-[55px]">Subject</span>
        <Caret className="ml-[8px]" />
        <Piece className="ml-[32px]" />
        <span className="ml-[5px] w-[40px]">Piece</span>
        <Caret className="ml-[14px]" />
        <Weld className="ml-[8px]" />
        <span className="ml-[4px] w-[37px]">Weld</span>
        <Instrument className="ml-[36px]" />
        <span className="ml-[5px] w-[81px]">Instrument</span>
        <Caret className="ml-[14px]" />
        <Probe className="ml-[8px]" />
        <span className="ml-[4px] w-[44px]">Probe</span>
        <Caret className="ml-[8px]" />
        <Notes className="ml-[34px]" />
        <Notebook className="ml-[11px]" />
        <GridDots className="ml-[11px]" />
        <Camera className="ml-[8px]" />
        <Caret className="ml-[8px]" />
        <PlayBars className="ml-[30px]" />
        <span className="ml-[3px] w-[86px]">Animations</span>
        <Caret className="ml-[13px]" />
        <LayerUp className="ml-[269px]" />
        <Caret className="ml-[2px]" />
        <div className="ml-[27px] w-[31px] h-[31px] shrink-0 rounded-[2px] border border-[#a8b8c8] bg-[#fedc7c] flex items-center justify-center"><Cube mode={0} /></div>
        <Cube mode={1} className="ml-[3px]" />
        <Cube mode={2} className="ml-[9px]" />
        <Hand className="ml-[27px]" />
        <Mag kind="move" className="ml-[10px]" />
        <Mag kind="rect" className="ml-[9px]" />
        <Mag kind="dots" className="ml-[9px]" />
        <Mag kind="plus" className="ml-[10px]" />
        <Mag kind="minus" className="ml-[9px]" />
      </div>

      {/* probes */}
      <div className="h-[71px] shrink-0 bg-[#f5f5f5] flex items-start pt-[3px] pl-[2px]">
        <Probe1 name="2L32-N55S 1-10 Sektor 39 - 45 A=32" v="15.00" />
        <Probe1 name="2L32-N55S 1-10 Compound 39 - 51 A=20" v="-37.00" className="ml-[4px]" />
      </div>
      <div className="h-[23px] shrink-0 bg-[#dcdcdc]" />

      {/* rulers + canvas */}
      <div className="h-[696px] shrink-0 flex bg-white">
        <div className="w-[34px] shrink-0 flex flex-col border-r border-[#222] bg-linear-to-r from-[#ececec] to-white">
          <div className="h-[35px] shrink-0 border-b border-[#222] flex items-start pt-[9px]"><div className="h-[2px] w-full bg-[#e8707c]" /></div>
          <LeftRuler />
        </div>
        <div className="flex-1 min-w-0 flex flex-col">
          <div className="h-[35px] shrink-0 overflow-hidden bg-linear-to-b from-white to-[#ededed]"><TopRuler /></div>
          <Drawing />
        </div>
      </div>

      {/* ready line */}
      <div className="h-[23px] shrink-0 border-t-2 border-[#7c7c7c] flex items-center pl-[2px] text-[18px] text-[#222]">Ready :</div>

      {/* ribbon */}
      <div className="h-[102px] shrink-0 border-t-2 border-[#e4e5e6] border-b-2 border-b-[#a8abae] bg-[#f5f6f7] flex pt-[2px]">
        {/* tools */}
        <div className="w-[212px] shrink-0 border-r border-[#dcdfe2]">
          <Row>
            <Active className="ml-[4px]"><ArrowPtr /></Active>
            <Magnet className="ml-[17px]" /><Caret className="ml-[4px]" />
            <WindowIcon className="ml-[14px]" /><Caret className="ml-[4px]" />
            <Active className="ml-[8px]"><ConsoleIcon /></Active>
            <PanelIcon className="ml-[6px]" />
          </Row>
          <Row>
            <Wrench className="ml-[9px]" /><Caret className="ml-[4px]" />
            <Layers className="ml-[16px]" /><Caret className="ml-[3px]" />
            <ZoomFrame className="ml-[13px]" /><Caret className="ml-[4px]" />
            <Editor className="ml-[13px]" /><Caret className="ml-[2px]" />
          </Row>
          <GroupLabel>Tools</GroupLabel>
        </div>
        {/* snap */}
        <div className="w-[113px] shrink-0 border-r border-[#dcdfe2]">
          <Row>
            <Snap kind="end" className="ml-[10px]" />
            <Snap kind="mid" className="ml-[13px]" />
            <Snap kind="on" className="ml-[15px]" />
          </Row>
          <Row>
            <Snap kind="ang" className="ml-[10px]" />
            <Snap kind="int" className="ml-[13px]" />
            <Active w="w-[33px]" className="ml-[9px]"><Snap kind="grid" /></Active>
          </Row>
          <GroupLabel>Snap</GroupLabel>
        </div>
        {/* edit */}
        <div className="w-[220px] shrink-0 border-r border-[#dcdfe2]">
          <Row>
            <ShapePaint className="ml-[10px]" /><Caret className="-ml-[3px] mb-[6px]" />
            <GrayEraser className="ml-[12px]" />
            <GrayAdd className="ml-[9px]" />
            <GrayCut className="ml-[14px]" />
            <GrayCopy className="ml-[17px]" />
            <Paste className="ml-[14px]" />
          </Row>
          <Row>
            <GrayStack className="ml-[12px]" />
            <GrayMirror className="ml-[13px]" />
            <GrayMove className="ml-[12px]" />
            <GrayGroup className="ml-[57px]" />
            <GrayGroup alt className="ml-[11px]" />
          </Row>
          <GroupLabel>Edit</GroupLabel>
        </div>
        {/* add geometry */}
        <div className="w-[310px] shrink-0 border-r border-[#dcdfe2]">
          <div className="flex h-[72px]">
            <div className="w-[115px] shrink-0 border-r-2 border-[#d2d4d6]">
              <Row>
                <GeoLine c={G} n={GN} className="ml-[12px]" />
                <GeoW c={G} n={GN} className="ml-[16px]" />
                <GeoCurve c={G} n={GN} className="ml-[16px]" />
              </Row>
              <Row>
                <GeoCircle c={G} n="#16703a" className="ml-[12px]" />
                <GeoPoly c={G} n={GN} className="ml-[15px]" />
                <GeoSquare c={G} n={GN} className="ml-[13px]" />
              </Row>
            </div>
            <div className="flex-1">
              <Row>
                <GeoLine c="#1a2a38" n={GN} className="ml-[11px]" />
                <GeoW c="#1a2a38" n={GN} className="ml-[16px]" />
                <GeoCurve c="#4a5a6a" n={GN} className="ml-[16px]" />
                <SkewRect className="ml-[14px]" />
                <DimIcon className="ml-[12px]" /><Caret className="ml-[4px]" />
              </Row>
              <Row>
                <GeoCircle c={B} n="#2a5fa8" fill="#e4eef8" className="ml-[11px]" />
                <GeoPoly c={B} n={GN} className="ml-[15px]" />
                <GeoSquare c={B} n={GN} className="ml-[13px]" />
                <TextBoxIcon className="ml-[14px]" />
                <ImageIcon className="ml-[14px]" />
              </Row>
            </div>
          </div>
          <GroupLabel>Add Geometry</GroupLabel>
        </div>
        {/* style */}
        <div className="w-[379px] shrink-0 border-r border-[#dcdfe2]">
          <div className="flex h-[72px]">
            <div className="w-[220px] shrink-0 pl-[7px] border-r-2 border-[#d2d4d6] flex flex-col text-[16px] font-['Liberation_Sans',sans-serif] font-bold text-[#444]">
              <div className="h-[27px] flex items-center shrink-0"><LinePencil /><span className="ml-[5px]">Line</span></div>
              <div className="flex gap-[6px]">
                <GrayBox>
                  <I w={14} h={15}><path d="M1 3h12" stroke="#888" /><path d="M1 7h12" stroke="#888" strokeWidth="2" /><path d="M1 12h12" stroke="#888" strokeWidth="3" /></I>
                </GrayBox>
                <GrayBox>
                  <I w={14} h={15}><path d="M1 3h12" stroke="#888" /><path d="M1 7h12" stroke="#888" strokeDasharray="1.5 1.5" /><path d="M1 12h12" stroke="#888" strokeDasharray="3 2" /></I>
                </GrayBox>
                <GrayBox><Ball /></GrayBox>
              </div>
              <div className="flex gap-[6px] mt-[4px]">
                <GrayBox><I w={14} h={15}><path d="M1 7.5h12" stroke="#888" /><circle cx="4" cy="7.5" r="2.5" fill="#888" /></I></GrayBox>
                <GrayBox><I w={14} h={15}><path d="M1 7.5h12" stroke="#888" /><circle cx="10" cy="7.5" r="2.5" fill="#888" /></I></GrayBox>
              </div>
            </div>
            <div className="w-[81px] shrink-0 pl-[7px] border-r-2 border-[#d2d4d6] flex flex-col text-[16px] font-['Liberation_Sans',sans-serif] font-bold text-[#444]">
              <div className="h-[27px] flex items-center shrink-0 pl-[2px]"><Bucket /><span className="ml-[5px]">Fill</span></div>
              <GrayBox><Ball /></GrayBox>
            </div>
            <div className="flex-1 pl-[6px] flex flex-col text-[16px] font-['Liberation_Sans',sans-serif] font-bold text-[#444]">
              <div className="h-[26px] flex items-center shrink-0">
                <span className="text-[#c8383e] text-[22px] font-normal font-['Liberation_Serif',serif] leading-none">A</span>
                <span className="text-[#2a5fa8] text-[13px] font-normal font-['Liberation_Serif',serif] leading-none mb-[8px]">a</span>
                <span className="ml-[6px]">Text</span>
              </div>
              <GrayBox><Ball /></GrayBox>
              <GrayBox className="mt-[3px]"><span className="font-['Liberation_Serif',serif] text-[12px] font-normal text-[#666]">A≑</span></GrayBox>
            </div>
          </div>
          <div className="flex h-[24px] items-center">
            <span className="flex-1" />
            <GroupLabel className="ml-[9px]">Style</GroupLabel>
            <span className="flex-1 flex justify-end pr-[6px]"><Launcher /></span>
          </div>
        </div>
        {/* construction aids */}
        <div className="flex-1 min-w-0 flex">
          <div className="w-[148px] shrink-0 pl-[5px] pt-[1px] flex flex-col">
            <div className="flex items-center h-[31px]">
              <div className="w-[32px] h-[30px] shrink-0 border border-[#9ec0e4] bg-[#e8f1fa] rounded-[2px] flex items-center justify-center">
                <ArrowV dbl /><LockBadge />
              </div>
              <div className="w-[68px] h-[27px] shrink-0 border border-[#707070] bg-white flex items-center justify-end pr-[4px] text-[14px] font-bold font-['Liberation_Sans',sans-serif]">0</div>
            </div>
            <div className="flex items-center h-[32px]">
              <div className="w-[32px] h-[30px] shrink-0 border border-[#9ec0e4] bg-[#e8f1fa] rounded-[2px] flex items-center justify-center">
                <I w={16} h={18}><path d="M1 17L10 3v14zM6 12h4" fill="none" stroke="#1d5a8a" strokeWidth="1.3" /><circle cx="7" cy="14" r="2" fill="none" stroke="#1d5a8a" /></I>
                <LockBadge />
              </div>
              <div className="w-[68px] h-[27px] shrink-0 border border-[#707070] bg-white flex items-center justify-end pr-[4px] text-[14px] font-bold font-['Liberation_Sans',sans-serif]">0</div>
            </div>
            <div className="flex items-center mt-[1px]">
              <I w={22} h={20} className="ml-[5px]">
                <rect x="1" y="1" width="19" height="18" fill="#fff" stroke="#1d5a8a" strokeWidth="1.5" />
                <path d="M3 5h3M3 10h3M3 15h3M8 5h10M8 10h10M8 15h10" stroke="#1d5a8a" strokeWidth="2" />
              </I>
              <div className="ml-[7px] w-[67px] h-[27px] border-2 border-[#dcdcdc] bg-[#efefef]" />
            </div>
          </div>
          <div className="w-[2px] h-[74px] mt-[1px] bg-[#c8cacc] shrink-0" />
          <div className="flex-1 min-w-0 flex flex-col">
            <div className="h-[72px] flex items-start">
              <div className="flex flex-col gap-[9px] pt-[3px] shrink-0">
                <div className="flex items-center">
                  <I w={20} h={12} className="ml-[6px]"><path d="M1 0v12M1 6h13" stroke="#1d5a8a" strokeWidth="1.8" /><path d="M20 6l-7-4v8z" fill="#1d5a8a" /></I>
                  <Ctrl className="ml-[5px]" />
                  <I w={22} h={10} className="ml-[9px]"><path d="M1 0v10M21 0v10M1 5h20" stroke="#1d5a8a" strokeWidth="1.6" /><path d="M2 5l6-4v8zM20 5l-6-4v8z" fill="#1d5a8a" /></I>
                  <Ctrl className="ml-[5px]" />
                </div>
                <div className="flex items-center">
                  <span className="ml-[9px]"><ArrowV /></span>
                  <Ctrl className="ml-[8px]" />
                  <span className="ml-[13px]"><ArrowV dbl /></span>
                  <Ctrl className="ml-[8px]" />
                </div>
              </div>
              {/* lock bracket */}
              <div className="shrink-0 relative w-[26px] h-[60px] mt-[6px]">
                <svg width="26" height="60" viewBox="0 0 26 60" className="block">
                  <path d="M0 9h20v40H0" fill="none" stroke="#b5b7b9" strokeWidth="5" />
                </svg>
                <div className="absolute left-[7px] top-[20px] w-[19px] h-[21px] rounded-[3px] border border-[#cfd2d5] bg-[#f2f3f4] flex items-center justify-center"><LockBadge /></div>
              </div>
              {/* dial */}
              <div className="ml-[8px] shrink-0 w-[63px] mt-[5px] flex flex-col">
                <svg width="63" height="38" viewBox="0 0 63 38" className="block">
                  <path d="M.5 38V32A31 31 0 0 1 62.5 32V38" fill="#f4f5f6" stroke="#b6b8ba" strokeWidth="1.5" />
                  <path d="M31.5 6V34" stroke="#a0a2a4" />
                  <circle cx="31.5" cy="8" r="5" fill="#a5a9b4" stroke="#7e8288" />
                  <path d="M10 13l4 4M53 13l-4 4M1 34h4M62 34h-4" stroke="#8a8c8e" strokeWidth="1.5" />
                </svg>
                <div className="h-[24px] border-2 border-t-0 border-[#bcbdbe] bg-white flex items-center justify-center text-[15.5px] font-bold font-['Liberation_Sans',sans-serif] text-[#222]">0.0</div>
              </div>
              {/* alignment grid */}
              <div className="ml-[7px] mt-[19px] w-[47px] h-[47px] shrink-0 border border-[#c4c6c8] grid grid-cols-3 grid-rows-3 bg-[#e4e5e6]">
                {range(9).map((i) => (
                  <div key={i} className={`border border-[#f4f4f4] ${i === 4 || i === 5 ? 'bg-[#d7dadc]' : 'bg-[#e6e7e8]'}`} />
                ))}
              </div>
            </div>
            <GroupLabel className="justify-start ml-[41px]">Construction Aids</GroupLabel>
          </div>
        </div>
      </div>

      {/* status bar */}
      <div className="h-[34px] shrink-0 bg-[#f5f5f5] flex items-center">
        <svg width="23" height="22" viewBox="0 0 23 22" className="ml-[1507px] shrink-0">
          <path d="M3 3v16h18" fill="none" stroke="#1d5a8a" strokeWidth="1.8" />
          <path d="M3 0L0 5h6zM22 19l-5-3v6z" fill="#1d5a8a" />
          <path d="M15 2v8M11 6h8" stroke="#1d5a8a" strokeWidth="1.5" />
        </svg>
        <span className="ml-[32px] text-[18px] text-[#333] font-['Liberation_Sans',sans-serif] whitespace-nowrap">87.00 , 60.00</span>
        <span className="ml-auto w-[38px] h-[16px] rounded-full bg-[#a9a3f5] text-white text-[13px] font-bold leading-none flex items-center justify-center font-['Liberation_Sans',sans-serif]">mm</span>
        <svg width="12" height="14" viewBox="0 0 12 14" className="ml-[3px] mr-[4px] mt-[8px] shrink-0">
          <path d="M9 1h2M5 6h2M9 6h2M1 11h2M5 11h2M9 11h2" stroke="#6a6d70" strokeWidth="2" />
        </svg>
      </div>
      <div className="h-[2px] shrink-0 bg-[#1c4a72]" />
    </div>
  )
}
